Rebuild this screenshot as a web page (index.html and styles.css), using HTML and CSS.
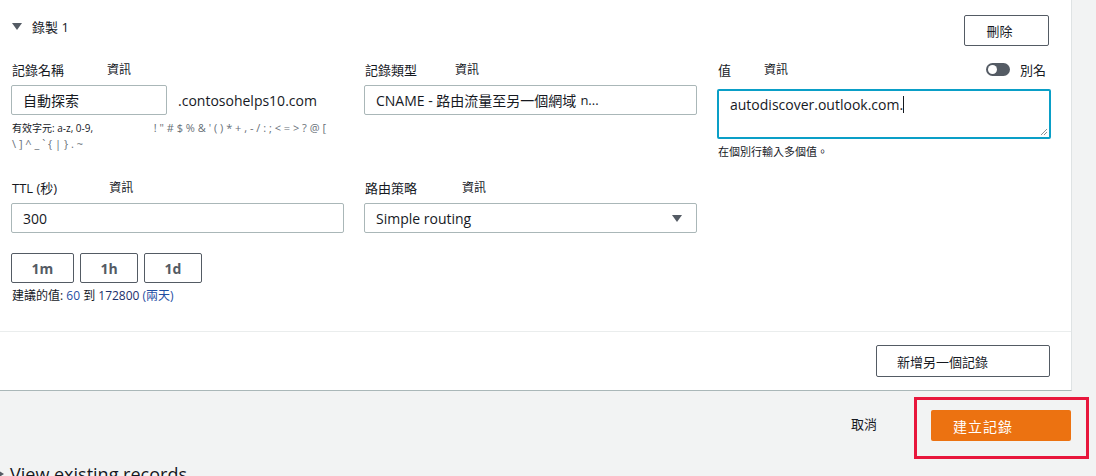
FILE: index.html
```html
<!DOCTYPE html>
<html lang="zh-Hant">
<head>
<meta charset="utf-8">
<title>建立記錄</title>
<link rel="stylesheet" href="styles.css">
</head>
<body>
<div class="page">
  <section class="card">
    <div class="card-body">
      <div class="card-head">
        <div class="title">
          <span class="caret-down"></span>
          <span>錄製 1</span>
        </div>
        <button class="btn btn-delete">刪除</button>
      </div>

      <div class="grid">
        <div class="field">
          <div class="label-row"><span>記錄名稱</span><span class="info info-1">資訊</span></div>
          <div class="name-row">
            <div class="input input-name">自動探索</div>
            <span class="suffix">.contosohelps10.com</span>
          </div>
          <div class="valid">有效字元: a-z, 0-9, <span class="sym">! " # $ % &amp; ' ( ) * + , - / : ; &lt; = &gt; ? @ [<br>\ ] ^ _ ` { | } . ~</span></div>
        </div>

        <div class="field">
          <div class="label-row"><span>記錄類型</span><span class="info info-2">資訊</span></div>
          <div class="input">CNAME - 路由流量至另一個網域 <span class="ellip">n...</span></div>
        </div>

        <div class="field">
          <div class="label-row label-row-tall">
            <span>值</span><span class="info info-3">資訊</span>
            <span class="alias"><span class="toggle"><span class="knob"></span></span>別名</span>
          </div>
          <div class="textarea">autodiscover.outlook.com.<span class="text-caret"></span>
            <svg class="grip" width="9" height="9" viewBox="0 0 9 9"><path d="M8 2 L2 8 M8 5 L5 8" stroke="#8d9296" stroke-width="1"/></svg>
          </div>
          <div class="help">在個別行輸入多個值。</div>
        </div>

        <div class="field">
          <div class="label-row"><span>TTL (秒)</span><span class="info info-4">資訊</span></div>
          <div class="input">300</div>
          <div class="ttl-btns">
            <button class="btn btn-ttl btn-1m">1m</button>
            <button class="btn btn-ttl">1h</button>
            <button class="btn btn-ttl">1d</button>
          </div>
          <div class="recommend">建議的值: <span class="num">60</span> 到 <span class="num num-dark">172800</span> <span class="num">(兩天)</span></div>
        </div>

        <div class="field">
          <div class="label-row"><span>路由策略</span><span class="info info-5">資訊</span></div>
          <div class="input select">Simple routing<span class="sel-arrow"></span></div>
        </div>
      </div>
    </div>
    <div class="card-foot">
      <button class="btn btn-add">新增另一個記錄</button>
    </div>
  </section>

  <div class="actions">
    <span class="cancel">取消</span>
    <div class="highlight">
      <button class="btn-primary">建立記錄</button>
    </div>
  </div>

  <div class="existing"><span class="caret-right"></span>View existing records</div>
</div>
</body>
</html>
```

FILE: styles.css
```css
* { box-sizing: border-box; }

html, body {
  margin: 0;
  padding: 0;
}

body {
  background: #f2f3f3;
  color: #16191f;
  font-family: "Open Sans", "Noto Sans CJK TC", sans-serif;
  font-size: 14px;
  width: 1096px;
  height: 476px;
  overflow: hidden;
}

.page {
  width: 1096px;
}

.card {
  width: 1072px;
  background: #fff;
  border-right: 1px solid #dfe3e4;
  border-bottom: 1px solid #aab7b8;
}

.card-body {
  padding: 15px 20px 27px 11px;
  border-bottom: 1px solid #eaeded;
}

.card-head {
  display: flex;
  justify-content: space-between;
  align-items: flex-start;
  padding-right: 2px;
}

.title {
  display: flex;
  align-items: center;
  gap: 10px;
  height: 22px;
  padding-left: 1px;
  font-size: 13px;
}

.caret-down {
  width: 0;
  height: 0;
  border-left: 5px solid transparent;
  border-right: 5px solid transparent;
  border-top: 7px solid #545b64;
}

.btn {
  font-family: "Open Sans", "Noto Sans CJK TC", sans-serif;
  background: #fff;
  border: 1px solid #545b64;
  border-radius: 2px;
  color: #16191f;
  font-size: 13px;
  padding: 0;
  cursor: pointer;
}

.btn-delete {
  width: 85px;
  height: 31px;
  padding-right: 14px;
}

.grid {
  display: grid;
  grid-template-columns: 333px 333px 334px;
  column-gap: 20px;
  row-gap: 17px;
  margin-top: 13px;
}

.label-row {
  display: flex;
  align-items: center;
  height: 20px;
  margin-bottom: 6px;
  padding-left: 1px;
  font-size: 13px;
}

.label-row-tall {
  margin-bottom: 10px;
}

.info {
  font-size: 12px;
  margin-left: 43px;
}
.info-2 { margin-left: 38px; }
.info-3 { margin-left: 33px; }
.info-4 { margin-left: 52px; }
.info-5 { margin-left: 45px; }

.alias {
  margin-left: auto;
  display: flex;
  align-items: center;
  gap: 10px;
  margin-right: 5px;
}

.toggle {
  width: 24px;
  height: 13px;
  border-radius: 7px;
  background: #545b64;
  display: flex;
  align-items: center;
  padding-left: 2px;
}

.knob {
  width: 9px;
  height: 9px;
  border-radius: 50%;
  background: #fff;
}

.input {
  height: 30px;
  border: 1px solid #aab7b8;
  border-radius: 2px;
  display: flex;
  align-items: center;
  padding: 0 11px;
  font-size: 14px;
  white-space: nowrap;
}

.ellip {
  margin-left: 4px;
  font-size: 13px;
}

.name-row {
  display: flex;
  align-items: center;
  gap: 11px;
}

.input-name {
  width: 156px;
}

.suffix {
  font-size: 14px;
}

.valid {
  margin-top: 5px;
  font-size: 10px;
  line-height: 16px;
  padding-left: 1px;
}

.sym {
  color: #687078;
  margin-left: 58px;
  font-size: 11px;
}

.textarea {
  position: relative;
  height: 50px;
  border: 2px solid #0a9fc7;
  border-radius: 2px;
  padding: 4px 11px;
  font-size: 14px;
  line-height: 20px;
}

.text-caret {
  display: inline-block;
  width: 1px;
  height: 17px;
  background: #16191f;
  vertical-align: -3px;
}

.grip {
  position: absolute;
  right: 1px;
  bottom: 1px;
}

.help {
  margin-top: 5px;
  font-size: 11px;
  line-height: 16px;
  padding-left: 1px;
}

.ttl-btns {
  display: flex;
  gap: 6px;
  margin-top: 20px;
}

.btn-ttl {
  width: 58px;
  height: 30px;
  font-weight: 700;
  font-size: 14px;
  color: #545b64;
}

.btn-1m {
  width: 63px;
}

.recommend {
  margin-top: 5px;
  font-size: 12px;
  line-height: 16px;
  padding-left: 1px;
}

.num {
  color: #1f4fa3;
}

.num-dark {
  color: #1b2f6b;
}

.select {
  justify-content: space-between;
}

.sel-arrow {
  width: 0;
  height: 0;
  border-left: 5px solid transparent;
  border-right: 5px solid transparent;
  border-top: 7px solid #545b64;
  margin-right: 3px;
}

.card-foot {
  display: flex;
  justify-content: flex-end;
  padding: 13px 21px 13px 0;
}

.btn-add {
  width: 174px;
  height: 32px;
  text-align: left;
  padding-left: 20px;
}

.actions {
  display: flex;
  justify-content: flex-end;
  align-items: flex-start;
  padding-right: 7px;
  margin-top: 6px;
}

.cancel {
  font-size: 13px;
  line-height: 20px;
  margin-top: 17px;
  margin-right: 37px;
}

.highlight {
  border: 3px solid #e8173c;
  padding: 10px 15px 15px 14px;
}

.btn-primary {
  display: block;
  width: 140px;
  height: 31px;
  background: #ec7211;
  border: none;
  border-radius: 2px;
  color: #fff;
  font-family: "Open Sans", "Noto Sans CJK TC", sans-serif;
  font-size: 14px;
  text-align: left;
  padding-left: 22px;
  letter-spacing: 1px;
}

.existing {
  display: flex;
  align-items: center;
  gap: 6px;
  margin-top: 3px;
  margin-left: -4px;
  font-size: 18px;
  line-height: 24px;
}

.caret-right {
  width: 0;
  height: 0;
  border-top: 5px solid transparent;
  border-bottom: 5px solid transparent;
  border-left: 8px solid #545b64;
}
```
